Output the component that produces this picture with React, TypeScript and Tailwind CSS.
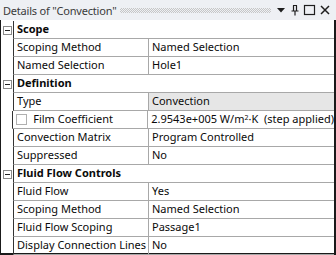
import React from "react";

type Row =
  | { kind: "header"; label: string }
  | { kind: "item"; label: string; value: string; check?: boolean; shaded?: boolean };

const rows: Row[] = [
  { kind: "header", label: "Scope" },
  { kind: "item", label: "Scoping Method", value: "Named Selection" },
  { kind: "item", label: "Named Selection", value: "Hole1" },
  { kind: "header", label: "Definition" },
  { kind: "item", label: "Type", value: "Convection", shaded: true },
  { kind: "item", label: "Film Coefficient", value: "", check: true },
  { kind: "item", label: "Convection Matrix", value: "Program Controlled" },
  { kind: "item", label: "Suppressed", value: "No" },
  { kind: "header", label: "Fluid Flow Controls" },
  { kind: "item", label: "Fluid Flow", value: "Yes" },
  { kind: "item", label: "Scoping Method", value: "Named Selection" },
  { kind: "item", label: "Fluid Flow Scoping", value: "Passage1" },
  { kind: "item", label: "Display Connection Lines", value: "No" },
];

function Minus() {
  return (
    <div className="flex h-[9px] w-[9px] items-center justify-center border border-[#8a8a8a] bg-white">
      <div className="h-px w-[5px] bg-[#222]" />
    </div>
  );
}

function TitleIcons() {
  return (
    <div className="flex items-center gap-[3px] pr-[5px]">
      <svg width="12" height="10" viewBox="0 0 12 10">
        <path d="M2 3h8L6 7.5z" fill="#1e1e1e" />
      </svg>
      <svg width="10" height="12" viewBox="0 0 10 12">
        <path d="M3 1.5h4M3.5 1.5v5.5M6.5 1.5v5.5M1.5 7h7M5 7v4.5" stroke="#1e1e1e" strokeWidth="1.2" fill="none" />
      </svg>
      <svg width="13" height="12" viewBox="0 0 13 12">
        <rect x="1.5" y="1.5" width="10" height="9" stroke="#1e1e1e" strokeWidth="1.2" fill="none" />
      </svg>
      <svg width="12" height="12" viewBox="0 0 12 12">
        <path d="M2 2l8 8M10 2l-8 8" stroke="#1e1e1e" strokeWidth="1.5" />
      </svg>
    </div>
  );
}

export default function App() {
  return (
    <div
      className="h-[255px] w-[336px] overflow-hidden bg-white text-[11px] text-[#0a0a0a]"
      style={{ fontFamily: '"Noto Sans", "Open Sans", sans-serif' }}
    >
      <div className="flex h-[20px] items-center bg-[#eef0f4] pl-[3px]">
        <span className="whitespace-nowrap text-[11px] leading-none tracking-[-0.2px] text-[#3a3a3a]">Details of "Convection"</span>
        <div className="mx-[4px] h-[5px] flex-1 bg-[conic-gradient(#c6c6c6_25%,transparent_0_50%,#c6c6c6_0_75%,transparent_0)] bg-[length:2px_2px]" />
        <TitleIcons />
      </div>
      <div className="h-[235px] border-b-2 border-l border-r-2 border-[#1a1a1a] pt-px">
        {rows.map((r, i) =>
          r.kind === "header" ? (
            <div key={i} className="flex h-[18px]">
              <div className="flex w-[12px] items-center justify-center">
                <Minus />
              </div>
              <div className="flex flex-1 items-center border-b border-l border-b-[#a8a8a8] border-l-[#333] pl-[3px] font-bold">
                {r.label}
              </div>
            </div>
          ) : (
            <div key={i} className="flex h-[18px]">
              <div className="w-[12px]" />
              <div className="flex flex-1 border-b border-l border-b-[#a8a8a8] border-l-[#333]">
                <div className="flex w-[135px] shrink-0 items-center gap-[6px] whitespace-nowrap border-r border-[#a8a8a8] pl-[3px]">
                  {r.check && <div className="h-[11px] w-[11px] border border-[#b0b0b0] bg-white" />}
                  {r.label}
                </div>
                <div
                  className={`flex min-w-0 flex-1 items-center overflow-hidden whitespace-nowrap pl-[3px] ${r.shaded ? "bg-[#e6e6e6]" : ""}`}
                >
                  {r.check ? (
                    <span>
                      2.9543e+005 W/m<sup className="text-[7px]">2</sup>·K&nbsp;&nbsp;(step applied)
                    </span>
                  ) : (
                    r.value
                  )}
                </div>
              </div>
            </div>
          )
        )}
      </div>
    </div>
  );
}
